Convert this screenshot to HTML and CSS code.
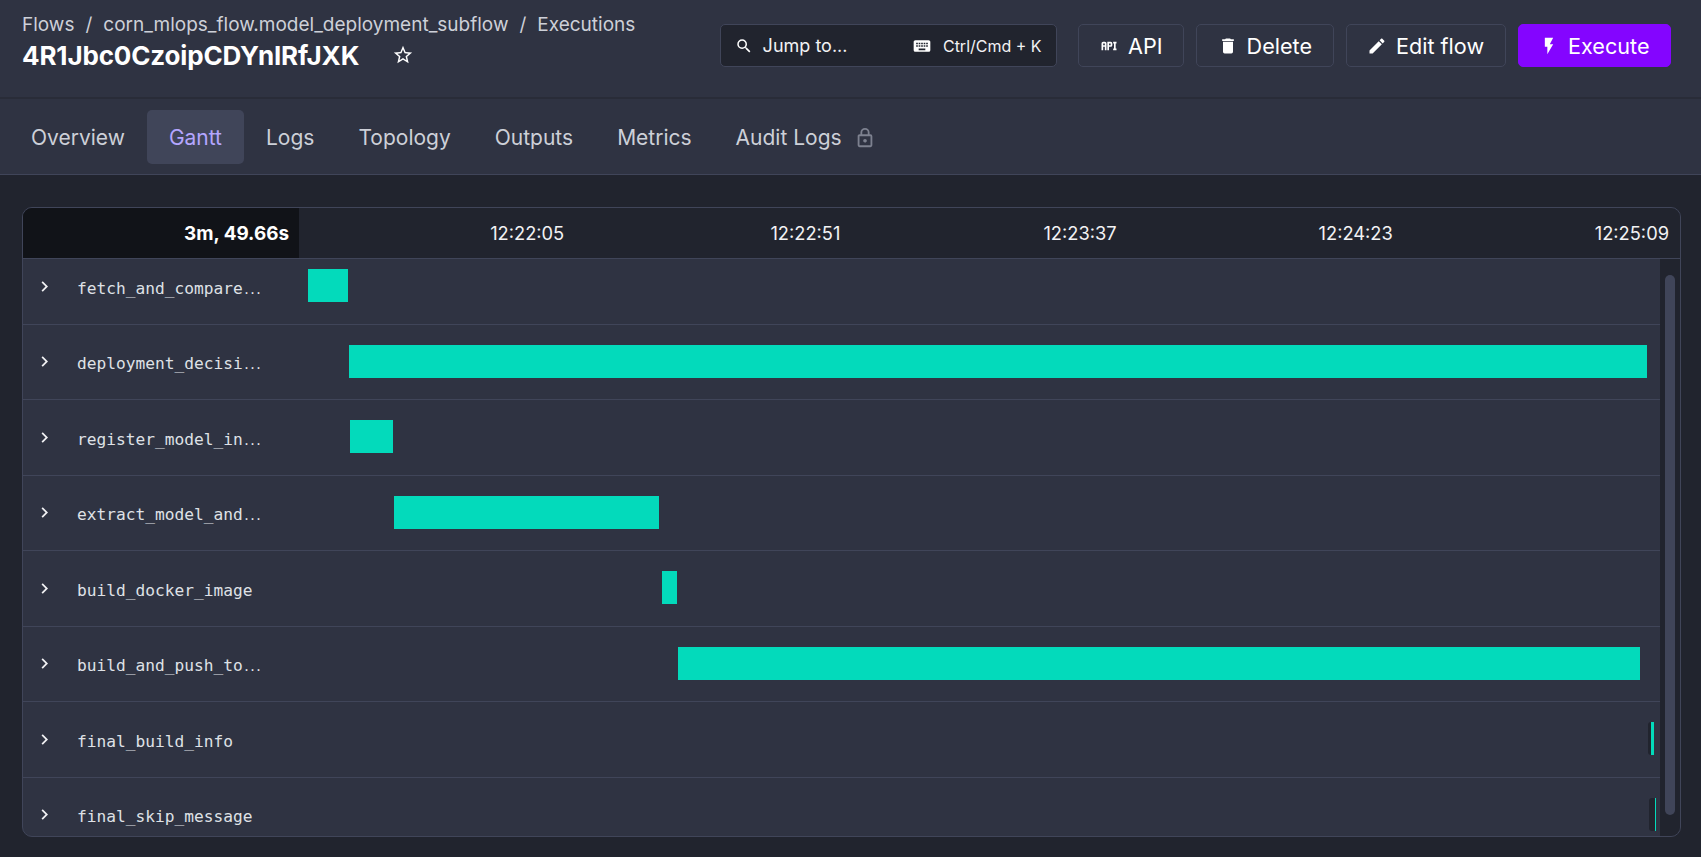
FILE: index.html
```html
<!DOCTYPE html>
<html lang="en">

<head>
    <meta charset="UTF-8">
    <meta name="viewport" content="width=device-width, initial-scale=1.0">
    <title>Executions - Gantt</title>
    <link rel="stylesheet" href="styles.css">
</head>

<body>
    <header class="top-bar">
        <div class="title-block">
            <nav class="breadcrumb">
                <span>Flows</span><span class="sep">/</span><span>corn_mlops_flow.model_deployment_subflow</span><span class="sep">/</span><span>Executions</span>
            </nav>
            <div class="title-row">
                <h1>4R1Jbc0CzoipCDYnIRfJXK</h1>
                <svg class="star" viewBox="0 0 24 24"><path d="M12,15.39L8.24,17.66L9.23,13.38L5.91,10.5L10.29,10.13L12,6.09L13.71,10.13L18.09,10.5L14.77,13.38L15.76,17.66M22,9.24L14.81,8.63L12,2L9.19,8.62L2,9.24L7.45,13.97L5.82,21L12,17.27L18.18,21L16.54,13.97L22,9.24Z"/></svg>
            </div>
        </div>
        <div class="actions">
            <div class="jump">
                <svg class="icon-sm" viewBox="0 0 24 24"><path d="M9.5,3A6.5,6.5 0 0,1 16,9.5C16,11.11 15.41,12.59 14.44,13.73L14.71,14H15.5L20.5,19L19,20.5L14,15.5V14.71L13.73,14.44C12.59,15.41 11.11,16 9.5,16A6.5,6.5 0 0,1 3,9.5A6.5,6.5 0 0,1 9.5,3M9.5,5C7,5 5,7 5,9.5C5,12 7,14 9.5,14C12,14 14,12 14,9.5C14,7 12,5 9.5,5Z"/></svg>
                <span class="jump-label">Jump to...</span>
                <svg class="icon-kb" viewBox="0 0 24 24"><path d="M19,10H17V8H19M19,13H17V11H19M16,10H14V8H16M16,13H14V11H16M16,17H8V15H16M7,10H5V8H7M7,13H5V11H7M8,11H10V13H8M8,8H10V10H8M11,11H13V13H11M11,8H13V10H11M20,5H4C2.89,5 2,5.89 2,7V17A2,2 0 0,0 4,19H20A2,2 0 0,0 22,17V7C22,5.89 21.1,5 20,5Z"/></svg>
                <span class="jump-keys">Ctrl/Cmd + K</span>
            </div>
            <button class="btn btn-api">
                <svg class="icon" viewBox="0 0 24 24"><path d="M7 7H5A2 2 0 0 0 3 9V17H5V13H7V17H9V9A2 2 0 0 0 7 7M7 11H5V9H7M14 7H10V17H12V13H14A2 2 0 0 0 16 11V9A2 2 0 0 0 14 7M14 11H12V9H14M20 9V15H21V17H17V15H18V9H17V7H21V9Z"/></svg>
                API
            </button>
            <button class="btn btn-delete">
                <svg class="icon" viewBox="0 0 24 24"><path d="M19,4H15.5L14.5,3H9.5L8.5,4H5V6H19M6,19A2,2 0 0,0 8,21H16A2,2 0 0,0 18,19V7H6V19Z"/></svg>
                Delete
            </button>
            <button class="btn btn-edit">
                <svg class="icon" viewBox="0 0 24 24"><path d="M20.71,7.04C21.1,6.65 21.1,6 20.71,5.63L18.37,3.29C18,2.9 17.35,2.9 16.96,3.29L15.12,5.12L18.87,8.87M3,17.25V21H6.75L17.81,9.93L14.06,6.18L3,17.25Z"/></svg>
                Edit flow
            </button>
            <button class="btn btn-execute">
                <svg class="icon" viewBox="0 0 24 24"><path d="M7,2V13H10V22L17,10H13L17,2H7Z"/></svg>
                Execute
            </button>
        </div>
    </header>

    <nav class="tabs">
        <a class="tab">Overview</a>
        <a class="tab active">Gantt</a>
        <a class="tab">Logs</a>
        <a class="tab">Topology</a>
        <a class="tab">Outputs</a>
        <a class="tab">Metrics</a>
        <a class="tab">Audit Logs
            <svg class="icon-lock" viewBox="0 0 24 24"><path d="M12,17C13.1,17 14,16.1 14,15C14,13.89 13.1,13 12,13A2,2 0 0,0 10,15A2,2 0 0,0 12,17M18,8A2,2 0 0,1 20,10V20A2,2 0 0,1 18,22H6A2,2 0 0,1 4,20V10C4,8.89 4.9,8 6,8H7V6A5,5 0 0,1 12,1A5,5 0 0,1 17,6V8H18M18,20V10H6V20H18M12,3A3,3 0 0,0 9,6V8H15V6A3,3 0 0,0 12,3Z"/></svg>
        </a>
    </nav>

    <main class="content">
        <section class="gantt">
            <div class="gantt-head">
                <div class="duration">3m, 49.66s</div>
                <div class="ticks">
                    <span>12:22:05</span>
                    <span>12:22:51</span>
                    <span>12:23:37</span>
                    <span>12:24:23</span>
                    <span>12:25:09</span>
                </div>
            </div>
            <div class="gantt-body">
                <div class="rows">
                    <div class="row">
                        <svg class="chevron" viewBox="0 0 24 24"><path d="M8.59,16.58L13.17,12L8.59,7.41L10,6L16,12L10,18L8.59,16.58Z"/></svg>
                        <span class="name">fetch_and_compare<span class="dots">...</span></span>
                        <div class="track"><div class="bar" style="margin-left:9px;width:40px"></div></div>
                    </div>
                    <div class="row">
                        <svg class="chevron" viewBox="0 0 24 24"><path d="M8.59,16.58L13.17,12L8.59,7.41L10,6L16,12L10,18L8.59,16.58Z"/></svg>
                        <span class="name">deployment_decisi<span class="dots">...</span></span>
                        <div class="track"><div class="bar" style="margin-left:50px;width:1298px"></div></div>
                    </div>
                    <div class="row">
                        <svg class="chevron" viewBox="0 0 24 24"><path d="M8.59,16.58L13.17,12L8.59,7.41L10,6L16,12L10,18L8.59,16.58Z"/></svg>
                        <span class="name">register_model_in<span class="dots">...</span></span>
                        <div class="track"><div class="bar" style="margin-left:51px;width:43px"></div></div>
                    </div>
                    <div class="row">
                        <svg class="chevron" viewBox="0 0 24 24"><path d="M8.59,16.58L13.17,12L8.59,7.41L10,6L16,12L10,18L8.59,16.58Z"/></svg>
                        <span class="name">extract_model_and<span class="dots">...</span></span>
                        <div class="track"><div class="bar" style="margin-left:95px;width:265px"></div></div>
                    </div>
                    <div class="row">
                        <svg class="chevron" viewBox="0 0 24 24"><path d="M8.59,16.58L13.17,12L8.59,7.41L10,6L16,12L10,18L8.59,16.58Z"/></svg>
                        <span class="name">build_docker_image</span>
                        <div class="track"><div class="bar" style="margin-left:363px;width:15px"></div></div>
                    </div>
                    <div class="row">
                        <svg class="chevron" viewBox="0 0 24 24"><path d="M8.59,16.58L13.17,12L8.59,7.41L10,6L16,12L10,18L8.59,16.58Z"/></svg>
                        <span class="name">build_and_push_to<span class="dots">...</span></span>
                        <div class="track"><div class="bar" style="margin-left:379px;width:962px"></div></div>
                    </div>
                    <div class="row">
                        <svg class="chevron" viewBox="0 0 24 24"><path d="M8.59,16.58L13.17,12L8.59,7.41L10,6L16,12L10,18L8.59,16.58Z"/></svg>
                        <span class="name">final_build_info</span>
                        <div class="track"><div class="stub" style="margin-left:1349px;width:6px"><div class="stub-fill" style="width:3px"></div></div></div>
                    </div>
                    <div class="row">
                        <svg class="chevron" viewBox="0 0 24 24"><path d="M8.59,16.58L13.17,12L8.59,7.41L10,6L16,12L10,18L8.59,16.58Z"/></svg>
                        <span class="name">final_skip_message</span>
                        <div class="track"><div class="stub" style="margin-left:1350px;width:7px"><div class="stub-fill" style="width:1px"></div></div></div>
                    </div>
                </div>
                <div class="scroll-rail"><div class="scroll-thumb"></div></div>
            </div>
        </section>
    </main>
</body>

</html>
```

FILE: styles.css
```css
* {
    box-sizing: border-box;
}

html,
body {
    height: 100%;
}

body {
    margin: 0;
    overflow: hidden;
    font-family: Inter, "Noto Sans", sans-serif;
    background-color: #21242e;
    color: #fff;
}

.top-bar {
    height: 99px;
    display: flex;
    justify-content: space-between;
    padding: 13px 30px 0 22px;
    background-color: #2f3342;
    border-bottom: 2px solid #292c38;
}

.breadcrumb {
    display: flex;
    align-items: center;
    height: 23px;
    font-size: 19px;
    color: #cdd0d8;
}

.sep {
    margin: 0 11px;
}

.title-row {
    display: flex;
    align-items: center;
    height: 36px;
    margin-top: 1px;
}

h1 {
    margin: 0;
    font-size: 26px;
    font-weight: 700;
    letter-spacing: -0.15px;
}

.star {
    width: 22px;
    height: 22px;
    margin-left: 33px;
    fill: #fff;
}

.actions {
    display: flex;
    gap: 12px;
    height: 43px;
    margin-top: 11px;
}

.jump {
    width: 337px;
    margin-right: 9px;
    display: flex;
    align-items: center;
    padding: 0 14px;
    background-color: #21242e;
    border: 1px solid #404559;
    border-radius: 5px;
    font-size: 18px;
    color: #f2f2f4;
}

.icon-sm {
    width: 18px;
    height: 18px;
    fill: #fff;
}

.jump-label {
    flex: 1;
    margin-left: 10px;
}

.icon-kb {
    width: 20px;
    height: 20px;
    margin-right: 11px;
    fill: #fff;
}

.jump-keys {
    font-size: 16px;
}

.btn {
    display: flex;
    align-items: center;
    gap: 9px;
    height: 43px;
    padding: 0 20.5px;
    background-color: #2f3342;
    border: 1px solid #404559;
    border-radius: 5px;
    color: #fff;
    font-family: inherit;
    font-size: 21.6px;
}

.icon {
    width: 20px;
    height: 20px;
    fill: #fff;
}

.btn-execute {
    background-color: #8405ff;
    border-color: #8405ff;
}

.tabs {
    height: 76px;
    display: flex;
    align-items: center;
    padding: 0 9px;
    background-color: #2f3342;
    border-bottom: 1px solid #404559;
}

.tab {
    display: flex;
    align-items: center;
    height: 54px;
    margin-top: 1px;
    padding: 1px 22px 0;
    border-radius: 5px;
    font-size: 21px;
    color: #cdd0d8;
}

.tab.active {
    background-color: #404559;
    color: #b4a6ff;
}

.icon-lock {
    width: 22px;
    height: 22px;
    margin-left: 12px;
    fill: #7d818f;
}

.content {
    padding: 32px 20px 0 22px;
}

.gantt {
    height: 630px;
    display: flex;
    flex-direction: column;
    overflow: hidden;
    border: 1px solid #404559;
    border-radius: 10px;
    background-color: #2f3342;
}

.gantt-head {
    height: 51px;
    flex-shrink: 0;
    display: flex;
    background-color: #21242e;
    border-bottom: 1px solid #404559;
    font-size: 18.3px;
}

.duration {
    width: 276px;
    display: flex;
    align-items: center;
    justify-content: flex-end;
    padding-right: 10px;
    background-color: #111318;
    font-size: 18.9px;
    font-weight: 700;
}

.ticks {
    flex: 1;
    display: grid;
    grid-template-columns: repeat(5, 1fr);
    align-items: center;
    text-align: right;
    color: #f2f2f4;
}

.ticks span {
    padding-right: 11px;
}

.gantt-body {
    flex: 1;
    display: flex;
    min-height: 0;
}

.rows {
    flex: 1;
    min-width: 0;
    overflow: hidden;
}

/* first row is scrolled under the header */
.row {
    height: 75.5px;
    display: flex;
    align-items: center;
    border-bottom: 1px solid #404559;
}

.row:first-child {
    margin-top: -10px;
}

.chevron {
    width: 21px;
    height: 21px;
    margin-left: 11px;
    fill: #f2f2f4;
}

.name {
    width: 244px;
    padding: 4px 0 0 22px;
    font-family: "DejaVu Sans Mono", "Liberation Mono", monospace;
    font-size: 16.2px;
    color: #dfe1e6;
}

.dots {
    font-size: 12.5px;
    letter-spacing: -1.5px;
}

.track {
    flex: 1;
    min-width: 0;
    display: flex;
    margin-top: -1px;
}

.bar {
    height: 33px;
    background-color: #03dabb;
}

.stub {
    height: 33px;
    display: flex;
    justify-content: flex-end;
    background-color: #21242e;
    border-radius: 3px;
}

.stub-fill {
    height: 100%;
    background-color: #03dabb;
}

.scroll-rail {
    width: 20px;
    flex-shrink: 0;
    padding: 16px 5px 0;
    background-color: #21242e;
}

.scroll-thumb {
    height: 540px;
    border-radius: 5px;
    background-color: #404559;
}
```
